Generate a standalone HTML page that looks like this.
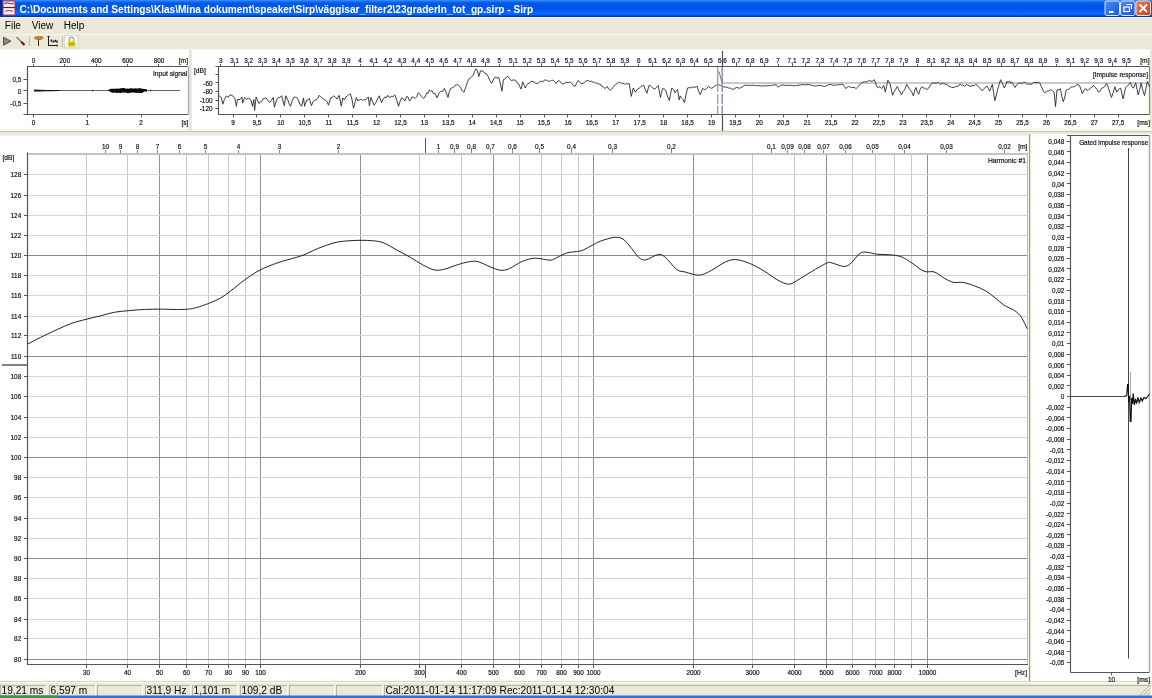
<!DOCTYPE html><html><head><meta charset="utf-8"><title>Sirp</title><style>html,body{margin:0;padding:0;background:#ECE9D8;overflow:hidden;width:1152px;height:698px;}svg{display:block;will-change:transform;}</style></head><body><svg width="1152" height="698" viewBox="0 0 1152 698"><rect x="0" y="0" width="1152" height="698" fill="#ECE9D8"/><defs><linearGradient id="tb" x1="0" y1="0" x2="0" y2="1"><stop offset="0" stop-color="#3A93FF"/><stop offset="0.1" stop-color="#1a6ef5"/><stop offset="0.2" stop-color="#0058E6"/><stop offset="0.55" stop-color="#0056E8"/><stop offset="0.8" stop-color="#0866FF"/><stop offset="1" stop-color="#0760F5"/></linearGradient><linearGradient id="cl" x1="0" y1="0" x2="1" y2="1"><stop offset="0" stop-color="#E8805A"/><stop offset="1" stop-color="#C8401A"/></linearGradient><linearGradient id="bb" x1="0" y1="0" x2="1" y2="1"><stop offset="0" stop-color="#4C8BF5"/><stop offset="1" stop-color="#1A55D8"/></linearGradient></defs><rect x="0" y="0" width="1152" height="16" fill="url(#tb)"/><rect x="0" y="15.5" width="1152" height="1.5" fill="#0038B0"/><rect x="0" y="17" width="1152" height="1" fill="#F4F6FF"/><rect x="0" y="0" width="2.5" height="17" fill="#0028A0"/><rect x="2.5" y="0.5" width="13" height="15" fill="#B03050"/><rect x="3.5" y="1.5" width="11" height="13" fill="#FBEFF3"/><line x1="3" y1="7.5" x2="15" y2="7.5" stroke="#8A1030" stroke-width="1.2"/><path d="M4,4 Q6,2.5 8,3 T12,4 L14,3" fill="none" stroke="#333" stroke-width="1"/><path d="M5,12 Q7,9.5 9,10.5 T13,11" fill="none" stroke="#444" stroke-width="0.9"/><text x="19.5" y="12.6" fill="#FFFFFF" font-family="Liberation Sans, sans-serif" font-weight="bold" font-size="10.08" id="title">C:\Documents and Settings\Klas\Mina dokument\speaker\Sirp\väggisar_filter2\23graderIn_tot_gp.sirp - Sirp</text><rect x="1105" y="1" width="14.5" height="14.5" rx="2" fill="url(#bb)" stroke="#D8E6FF" stroke-width="1"/><rect x="1120.5" y="1" width="14.5" height="14.5" rx="2" fill="url(#bb)" stroke="#D8E6FF" stroke-width="1"/><rect x="1136" y="1" width="14.5" height="14.5" rx="2" fill="url(#cl)" stroke="#F0E0E0" stroke-width="1"/><rect x="1109" y="11" width="4.5" height="2" fill="#FFFFFF"/><rect x="1124" y="7" width="5.5" height="4.5" fill="none" stroke="#fff" stroke-width="1.2"/><path d="M1126.5,4.5 h5 v4.5" fill="none" stroke="#fff" stroke-width="1.2"/><path d="M1139.5,4.5 L1147,12 M1147,4.5 L1139.5,12" stroke="#fff" stroke-width="1.8"/><g font-family="Liberation Sans, sans-serif" font-size="10" fill="#000"><text x="4.8" y="29">File</text><text x="31.8" y="29">View</text><text x="63.8" y="29">Help</text></g><rect x="0" y="34" width="1152" height="1" fill="#F7F6EF"/><path d="M3.5,37.2 L11,41.2 L3.5,45.2 Z" fill="#8A8A8A" stroke="#2a2a2a" stroke-width="0.7" stroke-linejoin="round"/><line x1="16.5" y1="37" x2="21.5" y2="42" stroke="#1a1a1a" stroke-width="1"/><line x1="21.2" y1="41.8" x2="24.5" y2="45" stroke="#7A1010" stroke-width="2.1"/><line x1="29.5" y1="36" x2="29.5" y2="46" stroke="#C4C0AE" stroke-width="1"/><ellipse cx="38.8" cy="37.9" rx="4.6" ry="1.7" fill="#D4963C" stroke="#9A6A20" stroke-width="0.5"/><rect x="36.3" y="37.4" width="1" height="1" fill="#5a3a10"/><rect x="38.3" y="37.4" width="1" height="1" fill="#5a3a10"/><rect x="40.3" y="37.4" width="1" height="1" fill="#5a3a10"/><line x1="38.5" y1="39.2" x2="38.5" y2="46" stroke="#2a2a2a" stroke-width="1"/><line x1="48.5" y1="36" x2="48.5" y2="46" stroke="#1a1a1a" stroke-width="1"/><line x1="48.5" y1="45.5" x2="57.5" y2="45.5" stroke="#1a1a1a" stroke-width="1"/><rect x="47.5" y="36" width="2" height="1" fill="#1a1a1a"/><rect x="56.5" y="44.5" width="1" height="2" fill="#1a1a1a"/><rect x="50.5" y="39.5" width="1.6" height="2.2" fill="#202060"/><rect x="52.5" y="40.5" width="1.6" height="2.2" fill="#202060"/><rect x="54.5" y="39.8" width="1.6" height="2.2" fill="#202060"/><rect x="56.2" y="40.5" width="1.6" height="2.2" fill="#202060"/><line x1="62.5" y1="36" x2="62.5" y2="47" stroke="#C4C0AE" stroke-width="1"/><rect x="64.5" y="35.2" width="13.5" height="12.6" fill="#F6F5EF" stroke="#D4D0C0" stroke-width="0.7"/><path d="M69.3,41.5 v-2.2 a2.2,2.2 0 0 1 4.4,0 v2.2" fill="none" stroke="#8a8a8a" stroke-width="1"/><rect x="67.8" y="41" width="7.6" height="6" rx="1.5" fill="#D8D820"/><rect x="68.8" y="43" width="5.6" height="2" fill="#B0B000"/><rect x="0" y="49" width="1152" height="1" fill="#F6F5EE"/><rect x="0" y="50" width="189" height="81" fill="#FFFFFF"/><rect x="191.5" y="50" width="958.5" height="81" fill="#FFFFFF"/><rect x="0" y="135.5" width="1028.5" height="545.3" fill="#FFFFFF"/><rect x="1031" y="134" width="121" height="549.5" fill="#FFFFFF"/><line x1="1029.5" y1="134" x2="1029.5" y2="683" stroke="#9A988C" stroke-width="1"/><rect x="0" y="128.5" width="1152" height="2.5" fill="#F8F7F2"/><rect x="0" y="131" width="1152" height="1" fill="#C8C6B8"/><rect x="189" y="50" width="2.5" height="81" fill="#E6E4D8"/><line x1="86.5" y1="154" x2="86.5" y2="664.5" stroke="#C8C8C8" stroke-width="1"/><line x1="86.5" y1="664.5" x2="86.5" y2="668" stroke="#555555" stroke-width="1"/><line x1="127.5" y1="154" x2="127.5" y2="664.5" stroke="#C8C8C8" stroke-width="1"/><line x1="127.5" y1="664.5" x2="127.5" y2="668" stroke="#555555" stroke-width="1"/><line x1="159.5" y1="154" x2="159.5" y2="664.5" stroke="#939393" stroke-width="1"/><line x1="159.5" y1="664.5" x2="159.5" y2="668" stroke="#555555" stroke-width="1"/><line x1="186.5" y1="154" x2="186.5" y2="664.5" stroke="#C8C8C8" stroke-width="1"/><line x1="186.5" y1="664.5" x2="186.5" y2="668" stroke="#555555" stroke-width="1"/><line x1="208.5" y1="154" x2="208.5" y2="664.5" stroke="#C8C8C8" stroke-width="1"/><line x1="208.5" y1="664.5" x2="208.5" y2="668" stroke="#555555" stroke-width="1"/><line x1="228.5" y1="154" x2="228.5" y2="664.5" stroke="#C8C8C8" stroke-width="1"/><line x1="228.5" y1="664.5" x2="228.5" y2="668" stroke="#555555" stroke-width="1"/><line x1="245.5" y1="154" x2="245.5" y2="664.5" stroke="#C8C8C8" stroke-width="1"/><line x1="245.5" y1="664.5" x2="245.5" y2="668" stroke="#555555" stroke-width="1"/><line x1="260.5" y1="154" x2="260.5" y2="664.5" stroke="#939393" stroke-width="1"/><line x1="260.5" y1="664.5" x2="260.5" y2="668" stroke="#555555" stroke-width="1"/><line x1="360.5" y1="154" x2="360.5" y2="664.5" stroke="#939393" stroke-width="1"/><line x1="360.5" y1="664.5" x2="360.5" y2="668" stroke="#555555" stroke-width="1"/><line x1="419.5" y1="154" x2="419.5" y2="664.5" stroke="#C8C8C8" stroke-width="1"/><line x1="419.5" y1="664.5" x2="419.5" y2="668" stroke="#555555" stroke-width="1"/><line x1="461.5" y1="154" x2="461.5" y2="664.5" stroke="#C8C8C8" stroke-width="1"/><line x1="461.5" y1="664.5" x2="461.5" y2="668" stroke="#555555" stroke-width="1"/><line x1="493.5" y1="154" x2="493.5" y2="664.5" stroke="#939393" stroke-width="1"/><line x1="493.5" y1="664.5" x2="493.5" y2="668" stroke="#555555" stroke-width="1"/><line x1="519.5" y1="154" x2="519.5" y2="664.5" stroke="#C8C8C8" stroke-width="1"/><line x1="519.5" y1="664.5" x2="519.5" y2="668" stroke="#555555" stroke-width="1"/><line x1="541.5" y1="154" x2="541.5" y2="664.5" stroke="#C8C8C8" stroke-width="1"/><line x1="541.5" y1="664.5" x2="541.5" y2="668" stroke="#555555" stroke-width="1"/><line x1="561.5" y1="154" x2="561.5" y2="664.5" stroke="#C8C8C8" stroke-width="1"/><line x1="561.5" y1="664.5" x2="561.5" y2="668" stroke="#555555" stroke-width="1"/><line x1="578.5" y1="154" x2="578.5" y2="664.5" stroke="#C8C8C8" stroke-width="1"/><line x1="578.5" y1="664.5" x2="578.5" y2="668" stroke="#555555" stroke-width="1"/><line x1="593.5" y1="154" x2="593.5" y2="664.5" stroke="#939393" stroke-width="1"/><line x1="593.5" y1="664.5" x2="593.5" y2="668" stroke="#555555" stroke-width="1"/><line x1="693.5" y1="154" x2="693.5" y2="664.5" stroke="#939393" stroke-width="1"/><line x1="693.5" y1="664.5" x2="693.5" y2="668" stroke="#555555" stroke-width="1"/><line x1="752.5" y1="154" x2="752.5" y2="664.5" stroke="#C8C8C8" stroke-width="1"/><line x1="752.5" y1="664.5" x2="752.5" y2="668" stroke="#555555" stroke-width="1"/><line x1="794.5" y1="154" x2="794.5" y2="664.5" stroke="#C8C8C8" stroke-width="1"/><line x1="794.5" y1="664.5" x2="794.5" y2="668" stroke="#555555" stroke-width="1"/><line x1="826.5" y1="154" x2="826.5" y2="664.5" stroke="#939393" stroke-width="1"/><line x1="826.5" y1="664.5" x2="826.5" y2="668" stroke="#555555" stroke-width="1"/><line x1="852.5" y1="154" x2="852.5" y2="664.5" stroke="#C8C8C8" stroke-width="1"/><line x1="852.5" y1="664.5" x2="852.5" y2="668" stroke="#555555" stroke-width="1"/><line x1="875.5" y1="154" x2="875.5" y2="664.5" stroke="#C8C8C8" stroke-width="1"/><line x1="875.5" y1="664.5" x2="875.5" y2="668" stroke="#555555" stroke-width="1"/><line x1="894.5" y1="154" x2="894.5" y2="664.5" stroke="#C8C8C8" stroke-width="1"/><line x1="894.5" y1="664.5" x2="894.5" y2="668" stroke="#555555" stroke-width="1"/><line x1="911.5" y1="154" x2="911.5" y2="664.5" stroke="#C8C8C8" stroke-width="1"/><line x1="911.5" y1="664.5" x2="911.5" y2="668" stroke="#555555" stroke-width="1"/><line x1="927.5" y1="154" x2="927.5" y2="664.5" stroke="#939393" stroke-width="1"/><line x1="927.5" y1="664.5" x2="927.5" y2="668" stroke="#555555" stroke-width="1"/><line x1="27.5" y1="659.5" x2="1027.5" y2="659.5" stroke="#888888" stroke-width="1"/><line x1="24" y1="659.5" x2="27.5" y2="659.5" stroke="#555555" stroke-width="1"/><line x1="27.5" y1="638.5" x2="1027.5" y2="638.5" stroke="#D4D4D4" stroke-width="1"/><line x1="24" y1="638.5" x2="27.5" y2="638.5" stroke="#555555" stroke-width="1"/><line x1="27.5" y1="619.5" x2="1027.5" y2="619.5" stroke="#D4D4D4" stroke-width="1"/><line x1="24" y1="619.5" x2="27.5" y2="619.5" stroke="#555555" stroke-width="1"/><line x1="27.5" y1="598.5" x2="1027.5" y2="598.5" stroke="#D4D4D4" stroke-width="1"/><line x1="24" y1="598.5" x2="27.5" y2="598.5" stroke="#555555" stroke-width="1"/><line x1="27.5" y1="578.5" x2="1027.5" y2="578.5" stroke="#D4D4D4" stroke-width="1"/><line x1="24" y1="578.5" x2="27.5" y2="578.5" stroke="#555555" stroke-width="1"/><line x1="27.5" y1="558.5" x2="1027.5" y2="558.5" stroke="#888888" stroke-width="1"/><line x1="24" y1="558.5" x2="27.5" y2="558.5" stroke="#555555" stroke-width="1"/><line x1="27.5" y1="538.5" x2="1027.5" y2="538.5" stroke="#D4D4D4" stroke-width="1"/><line x1="24" y1="538.5" x2="27.5" y2="538.5" stroke="#555555" stroke-width="1"/><line x1="27.5" y1="518.5" x2="1027.5" y2="518.5" stroke="#D4D4D4" stroke-width="1"/><line x1="24" y1="518.5" x2="27.5" y2="518.5" stroke="#555555" stroke-width="1"/><line x1="27.5" y1="497.5" x2="1027.5" y2="497.5" stroke="#D4D4D4" stroke-width="1"/><line x1="24" y1="497.5" x2="27.5" y2="497.5" stroke="#555555" stroke-width="1"/><line x1="27.5" y1="477.5" x2="1027.5" y2="477.5" stroke="#D4D4D4" stroke-width="1"/><line x1="24" y1="477.5" x2="27.5" y2="477.5" stroke="#555555" stroke-width="1"/><line x1="27.5" y1="457.5" x2="1027.5" y2="457.5" stroke="#888888" stroke-width="1"/><line x1="24" y1="457.5" x2="27.5" y2="457.5" stroke="#555555" stroke-width="1"/><line x1="27.5" y1="437.5" x2="1027.5" y2="437.5" stroke="#D4D4D4" stroke-width="1"/><line x1="24" y1="437.5" x2="27.5" y2="437.5" stroke="#555555" stroke-width="1"/><line x1="27.5" y1="417.5" x2="1027.5" y2="417.5" stroke="#D4D4D4" stroke-width="1"/><line x1="24" y1="417.5" x2="27.5" y2="417.5" stroke="#555555" stroke-width="1"/><line x1="27.5" y1="396.5" x2="1027.5" y2="396.5" stroke="#D4D4D4" stroke-width="1"/><line x1="24" y1="396.5" x2="27.5" y2="396.5" stroke="#555555" stroke-width="1"/><line x1="27.5" y1="376.5" x2="1027.5" y2="376.5" stroke="#D4D4D4" stroke-width="1"/><line x1="24" y1="376.5" x2="27.5" y2="376.5" stroke="#555555" stroke-width="1"/><line x1="27.5" y1="356.5" x2="1027.5" y2="356.5" stroke="#888888" stroke-width="1"/><line x1="24" y1="356.5" x2="27.5" y2="356.5" stroke="#555555" stroke-width="1"/><line x1="27.5" y1="335.5" x2="1027.5" y2="335.5" stroke="#D4D4D4" stroke-width="1"/><line x1="24" y1="335.5" x2="27.5" y2="335.5" stroke="#555555" stroke-width="1"/><line x1="27.5" y1="316.5" x2="1027.5" y2="316.5" stroke="#D4D4D4" stroke-width="1"/><line x1="24" y1="316.5" x2="27.5" y2="316.5" stroke="#555555" stroke-width="1"/><line x1="27.5" y1="295.5" x2="1027.5" y2="295.5" stroke="#D4D4D4" stroke-width="1"/><line x1="24" y1="295.5" x2="27.5" y2="295.5" stroke="#555555" stroke-width="1"/><line x1="27.5" y1="275.5" x2="1027.5" y2="275.5" stroke="#D4D4D4" stroke-width="1"/><line x1="24" y1="275.5" x2="27.5" y2="275.5" stroke="#555555" stroke-width="1"/><line x1="27.5" y1="255.5" x2="1027.5" y2="255.5" stroke="#888888" stroke-width="1"/><line x1="24" y1="255.5" x2="27.5" y2="255.5" stroke="#555555" stroke-width="1"/><line x1="27.5" y1="235.5" x2="1027.5" y2="235.5" stroke="#D4D4D4" stroke-width="1"/><line x1="24" y1="235.5" x2="27.5" y2="235.5" stroke="#555555" stroke-width="1"/><line x1="27.5" y1="215.5" x2="1027.5" y2="215.5" stroke="#D4D4D4" stroke-width="1"/><line x1="24" y1="215.5" x2="27.5" y2="215.5" stroke="#555555" stroke-width="1"/><line x1="27.5" y1="195.5" x2="1027.5" y2="195.5" stroke="#D4D4D4" stroke-width="1"/><line x1="24" y1="195.5" x2="27.5" y2="195.5" stroke="#555555" stroke-width="1"/><line x1="27.5" y1="174.5" x2="1027.5" y2="174.5" stroke="#D4D4D4" stroke-width="1"/><line x1="24" y1="174.5" x2="27.5" y2="174.5" stroke="#555555" stroke-width="1"/><rect x="27.5" y="153" width="1000" height="2" fill="#C4C4C4"/><line x1="1027.5" y1="152.5" x2="1027.5" y2="664.5" stroke="#BBBBBB" stroke-width="1"/><line x1="27.5" y1="152.5" x2="27.5" y2="665" stroke="#555555" stroke-width="1.2"/><line x1="27" y1="664.5" x2="1028" y2="664.5" stroke="#555555" stroke-width="1.2"/><line x1="105.5" y1="150" x2="105.5" y2="153" stroke="#888888" stroke-width="1"/><line x1="120.5" y1="150" x2="120.5" y2="153" stroke="#888888" stroke-width="1"/><line x1="137.5" y1="150" x2="137.5" y2="153" stroke="#888888" stroke-width="1"/><line x1="157.5" y1="150" x2="157.5" y2="153" stroke="#888888" stroke-width="1"/><line x1="179.5" y1="150" x2="179.5" y2="153" stroke="#888888" stroke-width="1"/><line x1="205.5" y1="150" x2="205.5" y2="153" stroke="#888888" stroke-width="1"/><line x1="238.5" y1="150" x2="238.5" y2="153" stroke="#888888" stroke-width="1"/><line x1="279.5" y1="150" x2="279.5" y2="153" stroke="#888888" stroke-width="1"/><line x1="338.5" y1="150" x2="338.5" y2="153" stroke="#888888" stroke-width="1"/><line x1="438.5" y1="150" x2="438.5" y2="153" stroke="#888888" stroke-width="1"/><line x1="454.5" y1="150" x2="454.5" y2="153" stroke="#888888" stroke-width="1"/><line x1="471.5" y1="150" x2="471.5" y2="153" stroke="#888888" stroke-width="1"/><line x1="490.5" y1="150" x2="490.5" y2="153" stroke="#888888" stroke-width="1"/><line x1="512.5" y1="150" x2="512.5" y2="153" stroke="#888888" stroke-width="1"/><line x1="539.5" y1="150" x2="539.5" y2="153" stroke="#888888" stroke-width="1"/><line x1="571.5" y1="150" x2="571.5" y2="153" stroke="#888888" stroke-width="1"/><line x1="612.5" y1="150" x2="612.5" y2="153" stroke="#888888" stroke-width="1"/><line x1="671.5" y1="150" x2="671.5" y2="153" stroke="#888888" stroke-width="1"/><line x1="771.5" y1="150" x2="771.5" y2="153" stroke="#888888" stroke-width="1"/><line x1="787.5" y1="150" x2="787.5" y2="153" stroke="#888888" stroke-width="1"/><line x1="804.5" y1="150" x2="804.5" y2="153" stroke="#888888" stroke-width="1"/><line x1="823.5" y1="150" x2="823.5" y2="153" stroke="#888888" stroke-width="1"/><line x1="845.5" y1="150" x2="845.5" y2="153" stroke="#888888" stroke-width="1"/><line x1="872.5" y1="150" x2="872.5" y2="153" stroke="#888888" stroke-width="1"/><line x1="904.5" y1="150" x2="904.5" y2="153" stroke="#888888" stroke-width="1"/><line x1="946.5" y1="150" x2="946.5" y2="153" stroke="#888888" stroke-width="1"/><line x1="1004.5" y1="150" x2="1004.5" y2="153" stroke="#888888" stroke-width="1"/><line x1="425.5" y1="138" x2="425.5" y2="153" stroke="#555555" stroke-width="1"/><line x1="425.5" y1="664.5" x2="425.5" y2="678" stroke="#555555" stroke-width="1"/><line x1="2" y1="365" x2="27.5" y2="365" stroke="#606060" stroke-width="1.6"/><path d="M27.6,344 C30.68,342.45 39,338.05 46.1,334.7 C53.2,331.35 63.52,326.47 70.2,323.9 C76.88,321.33 81.2,320.63 86.2,319.3 C91.2,317.97 95.52,317.07 100.2,315.9 C104.88,314.73 109.62,313.17 114.3,312.3 C118.98,311.43 123.28,311.17 128.3,310.7 C133.32,310.23 139.05,309.77 144.4,309.5 C149.75,309.23 155.05,309.1 160.4,309.1 C165.75,309.1 171.82,309.5 176.5,309.5 C181.18,309.5 185.17,309.43 188.5,309.1 C191.83,308.77 193.15,308.43 196.5,307.5 C199.85,306.57 204.62,305.07 208.6,303.5 C212.58,301.93 216.7,300.22 220.4,298.1 C224.1,295.98 226.75,293.83 230.8,290.8 C234.85,287.77 240.35,283.08 244.7,279.9 C249.05,276.72 252.85,274.02 256.9,271.7 C260.95,269.38 264.67,267.77 269,266 C273.33,264.23 277.4,262.83 282.9,261.1 C288.4,259.37 296.22,257.68 302,255.6 C307.78,253.52 312.1,250.77 317.6,248.6 C323.1,246.43 329.78,243.9 335,242.6 C340.22,241.3 344.57,241.18 348.9,240.8 C353.23,240.42 356.95,240.3 361,240.3 C365.05,240.3 369.43,240.37 373.2,240.8 C376.97,241.23 379.55,241.3 383.6,242.9 C387.65,244.5 393.03,248 397.5,250.4 C401.97,252.8 406.22,254.9 410.4,257.3 C414.58,259.7 418.55,262.68 422.6,264.8 C426.65,266.92 430.95,269.3 434.7,270 C438.45,270.7 441.33,269.87 445.1,269 C448.87,268.13 453.25,266.02 457.3,264.8 C461.35,263.58 465.93,262.22 469.4,261.7 C472.87,261.18 474.62,260.83 478.1,261.7 C481.58,262.57 486.53,265.47 490.3,266.9 C494.07,268.33 497.52,270.02 500.7,270.3 C503.88,270.58 505.93,270.03 509.4,268.6 C512.87,267.17 517.75,263.38 521.5,261.7 C525.25,260.02 529,259.03 531.9,258.5 C534.8,257.97 536.28,258.27 538.9,258.5 C541.52,258.73 545.28,259.72 547.6,259.9 C549.92,260.08 549.62,260.75 552.8,259.6 C555.98,258.45 562.07,254.45 566.7,253 C571.33,251.55 576.55,252.07 580.6,250.9 C584.65,249.73 587.7,247.62 591,246 C594.3,244.38 596.52,242.63 600.4,241.2 C604.28,239.77 610.53,237.75 614.3,237.4 C618.07,237.05 620.1,237.23 623,239.1 C625.9,240.97 629.1,245.57 631.7,248.6 C634.3,251.63 636.28,255.42 638.6,257.3 C640.92,259.18 642.42,260.33 645.6,259.9 C648.78,259.47 654.52,255.22 657.7,254.7 C660.88,254.18 661.52,254.33 664.7,256.8 C667.88,259.27 673.33,266.95 676.8,269.5 C680.27,272.05 681.73,271.15 685.5,272.1 C689.27,273.05 695.07,275.5 699.4,275.2 C703.73,274.9 707.17,272.5 711.5,270.3 C715.83,268.1 721.35,263.78 725.4,262 C729.45,260.22 731.75,259.37 735.8,259.6 C739.85,259.83 745.07,261.55 749.7,263.4 C754.33,265.25 758.97,267.95 763.6,270.7 C768.23,273.45 773.32,277.65 777.5,279.9 C781.68,282.15 785.38,284.13 788.7,284.2 C792.02,284.27 793.63,282.38 797.4,280.3 C801.17,278.22 806.38,274.58 811.3,271.7 C816.22,268.82 823.43,264.45 826.9,263 C830.37,261.55 829.22,262.42 832.1,263 C834.98,263.58 841.02,266.5 844.2,266.5 C847.38,266.5 848.58,265.18 851.2,263 C853.82,260.82 857.3,255.2 859.9,253.4 C862.5,251.6 863.92,252.05 866.8,252.2 C869.68,252.35 873.43,253.88 877.2,254.3 C880.97,254.72 885.35,254.27 889.4,254.7 C893.45,255.13 897.75,255.52 901.5,256.9 C905.25,258.28 908.13,260.6 911.9,263 C915.67,265.4 920.33,269.8 924.1,271.3 C927.87,272.8 931.03,270.78 934.5,272 C937.97,273.22 941.68,276.87 944.9,278.6 C948.12,280.33 950.8,281.77 953.8,282.4 C956.8,283.03 959.47,281.83 962.9,282.4 C966.33,282.97 970.57,284.37 974.4,285.8 C978.23,287.23 982.47,289 985.9,291 C989.33,293 991.95,295.42 995,297.8 C998.05,300.18 1000.95,303.18 1004.2,305.3 C1007.45,307.42 1011.63,308.5 1014.5,310.5 C1017.37,312.5 1019.28,314.25 1021.4,317.3 C1023.52,320.35 1026.23,326.88 1027.2,328.8" fill="none" stroke="#222" stroke-width="1"/><rect x="1070.5" y="135.6" width="0" height="0" fill="#000"/><line x1="1067" y1="662.5" x2="1070.5" y2="662.5" stroke="#555555" stroke-width="1"/><line x1="1067" y1="651.5" x2="1070.5" y2="651.5" stroke="#555555" stroke-width="1"/><line x1="1067" y1="641.5" x2="1070.5" y2="641.5" stroke="#555555" stroke-width="1"/><line x1="1067" y1="630.5" x2="1070.5" y2="630.5" stroke="#555555" stroke-width="1"/><line x1="1067" y1="620.5" x2="1070.5" y2="620.5" stroke="#555555" stroke-width="1"/><line x1="1067" y1="609.5" x2="1070.5" y2="609.5" stroke="#555555" stroke-width="1"/><line x1="1067" y1="598.5" x2="1070.5" y2="598.5" stroke="#555555" stroke-width="1"/><line x1="1067" y1="588.5" x2="1070.5" y2="588.5" stroke="#555555" stroke-width="1"/><line x1="1067" y1="577.5" x2="1070.5" y2="577.5" stroke="#555555" stroke-width="1"/><line x1="1067" y1="566.5" x2="1070.5" y2="566.5" stroke="#555555" stroke-width="1"/><line x1="1067" y1="556.5" x2="1070.5" y2="556.5" stroke="#555555" stroke-width="1"/><line x1="1067" y1="545.5" x2="1070.5" y2="545.5" stroke="#555555" stroke-width="1"/><line x1="1067" y1="534.5" x2="1070.5" y2="534.5" stroke="#555555" stroke-width="1"/><line x1="1067" y1="524.5" x2="1070.5" y2="524.5" stroke="#555555" stroke-width="1"/><line x1="1067" y1="513.5" x2="1070.5" y2="513.5" stroke="#555555" stroke-width="1"/><line x1="1067" y1="503.5" x2="1070.5" y2="503.5" stroke="#555555" stroke-width="1"/><line x1="1067" y1="492.5" x2="1070.5" y2="492.5" stroke="#555555" stroke-width="1"/><line x1="1067" y1="481.5" x2="1070.5" y2="481.5" stroke="#555555" stroke-width="1"/><line x1="1067" y1="471.5" x2="1070.5" y2="471.5" stroke="#555555" stroke-width="1"/><line x1="1067" y1="460.5" x2="1070.5" y2="460.5" stroke="#555555" stroke-width="1"/><line x1="1067" y1="449.5" x2="1070.5" y2="449.5" stroke="#555555" stroke-width="1"/><line x1="1067" y1="439.5" x2="1070.5" y2="439.5" stroke="#555555" stroke-width="1"/><line x1="1067" y1="428.5" x2="1070.5" y2="428.5" stroke="#555555" stroke-width="1"/><line x1="1067" y1="417.5" x2="1070.5" y2="417.5" stroke="#555555" stroke-width="1"/><line x1="1067" y1="407.5" x2="1070.5" y2="407.5" stroke="#555555" stroke-width="1"/><line x1="1067" y1="396.5" x2="1070.5" y2="396.5" stroke="#555555" stroke-width="1"/><line x1="1067" y1="385.5" x2="1070.5" y2="385.5" stroke="#555555" stroke-width="1"/><line x1="1067" y1="375.5" x2="1070.5" y2="375.5" stroke="#555555" stroke-width="1"/><line x1="1067" y1="364.5" x2="1070.5" y2="364.5" stroke="#555555" stroke-width="1"/><line x1="1067" y1="354.5" x2="1070.5" y2="354.5" stroke="#555555" stroke-width="1"/><line x1="1067" y1="343.5" x2="1070.5" y2="343.5" stroke="#555555" stroke-width="1"/><line x1="1067" y1="332.5" x2="1070.5" y2="332.5" stroke="#555555" stroke-width="1"/><line x1="1067" y1="322.5" x2="1070.5" y2="322.5" stroke="#555555" stroke-width="1"/><line x1="1067" y1="311.5" x2="1070.5" y2="311.5" stroke="#555555" stroke-width="1"/><line x1="1067" y1="300.5" x2="1070.5" y2="300.5" stroke="#555555" stroke-width="1"/><line x1="1067" y1="290.5" x2="1070.5" y2="290.5" stroke="#555555" stroke-width="1"/><line x1="1067" y1="279.5" x2="1070.5" y2="279.5" stroke="#555555" stroke-width="1"/><line x1="1067" y1="268.5" x2="1070.5" y2="268.5" stroke="#555555" stroke-width="1"/><line x1="1067" y1="258.5" x2="1070.5" y2="258.5" stroke="#555555" stroke-width="1"/><line x1="1067" y1="247.5" x2="1070.5" y2="247.5" stroke="#555555" stroke-width="1"/><line x1="1067" y1="237.5" x2="1070.5" y2="237.5" stroke="#555555" stroke-width="1"/><line x1="1067" y1="226.5" x2="1070.5" y2="226.5" stroke="#555555" stroke-width="1"/><line x1="1067" y1="215.5" x2="1070.5" y2="215.5" stroke="#555555" stroke-width="1"/><line x1="1067" y1="205.5" x2="1070.5" y2="205.5" stroke="#555555" stroke-width="1"/><line x1="1067" y1="194.5" x2="1070.5" y2="194.5" stroke="#555555" stroke-width="1"/><line x1="1067" y1="183.5" x2="1070.5" y2="183.5" stroke="#555555" stroke-width="1"/><line x1="1067" y1="173.5" x2="1070.5" y2="173.5" stroke="#555555" stroke-width="1"/><line x1="1067" y1="162.5" x2="1070.5" y2="162.5" stroke="#555555" stroke-width="1"/><line x1="1067" y1="151.5" x2="1070.5" y2="151.5" stroke="#555555" stroke-width="1"/><line x1="1067" y1="141.5" x2="1070.5" y2="141.5" stroke="#555555" stroke-width="1"/><line x1="1070.5" y1="135.6" x2="1070.5" y2="672.2" stroke="#555555" stroke-width="1.2"/><line x1="1067" y1="135.5" x2="1149.5" y2="135.5" stroke="#555555" stroke-width="1.2"/><line x1="1149.5" y1="135.6" x2="1149.5" y2="672.2" stroke="#A8A8A8" stroke-width="1.5"/><line x1="1070.5" y1="672.5" x2="1149.5" y2="672.5" stroke="#555555" stroke-width="1.2"/><line x1="1111.5" y1="672.2" x2="1111.5" y2="675.2" stroke="#555555" stroke-width="1"/><line x1="1128.5" y1="148" x2="1128.5" y2="658.5" stroke="#444" stroke-width="1"/><line x1="1130.5" y1="372" x2="1130.5" y2="400" stroke="#AAA" stroke-width="1"/><line x1="1070.5" y1="396.5" x2="1124.5" y2="396.5" stroke="#4a4a4a" stroke-width="1"/><path d="M1124,396.5 L1126.8,395.5 L1127.6,384.5 L1128.2,384.5 L1128.8,402.5 L1129.6,396 L1130.3,421.5 L1131,421.5 L1131.6,398 L1132.4,404 L1133.2,393.5 L1134.2,405 L1135.5,399 L1136.5,403.5 L1138,397.5 L1139.2,402.5 L1141,398 L1142.2,401 L1144,397.5 L1146,398.5 L1149.5,394" fill="none" stroke="#111" stroke-width="1.2"/><line x1="27" y1="66.5" x2="188" y2="66.5" stroke="#555555" stroke-width="1.2"/><line x1="27.5" y1="66.6" x2="27.5" y2="114.5" stroke="#555555" stroke-width="1.2"/><line x1="23.5" y1="114.5" x2="188" y2="114.5" stroke="#555555" stroke-width="1.2"/><line x1="188.5" y1="66.6" x2="188.5" y2="114.5" stroke="#A8A8A8" stroke-width="1.2"/><line x1="23.5" y1="79.5" x2="27" y2="79.5" stroke="#555555" stroke-width="1"/><line x1="23.5" y1="90.5" x2="27" y2="90.5" stroke="#555555" stroke-width="1"/><line x1="23.5" y1="103.5" x2="27" y2="103.5" stroke="#555555" stroke-width="1"/><line x1="33.5" y1="64" x2="33.5" y2="66.6" stroke="#555555" stroke-width="1"/><line x1="64.5" y1="64" x2="64.5" y2="66.6" stroke="#555555" stroke-width="1"/><line x1="96.5" y1="64" x2="96.5" y2="66.6" stroke="#555555" stroke-width="1"/><line x1="127.5" y1="64" x2="127.5" y2="66.6" stroke="#555555" stroke-width="1"/><line x1="158.5" y1="64" x2="158.5" y2="66.6" stroke="#555555" stroke-width="1"/><line x1="33.5" y1="114.5" x2="33.5" y2="117.5" stroke="#555555" stroke-width="1"/><line x1="87.5" y1="114.5" x2="87.5" y2="117.5" stroke="#555555" stroke-width="1"/><line x1="141.5" y1="114.5" x2="141.5" y2="117.5" stroke="#555555" stroke-width="1"/><line x1="34" y1="90.5" x2="180" y2="90.5" stroke="#666" stroke-width="1"/><path d="M34,89.6 L40,89.8 L46,90 L52,90 L60,90.2 L60,90.9 L52,91.2 L46,91.2 L40,91.4 L34,91.5 Z" fill="#111"/><path d="M108,90.31 L109.5,89.34 L111,88.77 L112.5,88.75 L114,88.77 L115.5,88.74 L117,88.42 L118.5,88.69 L120,88.24 L121.5,88.28 L123,87.92 L124.5,88.03 L126,88.67 L127.5,88.52 L129,88.64 L130.5,88.22 L132,88.31 L133.5,88.75 L135,88.19 L136.5,88.52 L138,88.39 L139.5,88.09 L141,88.58 L142.5,88.78 L144,89.04 L145.5,89.12 L147,89.62 L147,91.88 L145.5,91.31 L144,91.76 L142.5,92.74 L141,92.92 L139.5,93.03 L138,92.67 L136.5,92.93 L135,92.78 L133.5,92.59 L132,92.46 L130.5,92.74 L129,92.92 L127.5,93.13 L126,92.51 L124.5,92.66 L123,92.44 L121.5,92.76 L120,93.25 L118.5,92.6 L117,93.14 L115.5,92.48 L114,92.79 L112.5,92.86 L111,92.28 L109.5,91.34 L108,90.74 Z" fill="#0a0a0a"/><rect x="92" y="89.8" width="1.2" height="1.6" fill="#333"/><rect x="150" y="89.8" width="1.2" height="1.6" fill="#333"/><line x1="215.5" y1="66.5" x2="1149.7" y2="66.5" stroke="#555555" stroke-width="1.2"/><line x1="218.5" y1="66.6" x2="218.5" y2="114.5" stroke="#555555" stroke-width="1.2"/><line x1="218.5" y1="114.5" x2="1149.7" y2="114.5" stroke="#555555" stroke-width="1.2"/><line x1="1149.5" y1="66.6" x2="1149.5" y2="114.5" stroke="#888888" stroke-width="1.2"/><line x1="215.5" y1="74.5" x2="218.5" y2="74.5" stroke="#555555" stroke-width="1"/><line x1="215.5" y1="82.5" x2="218.5" y2="82.5" stroke="#555555" stroke-width="1"/><line x1="215.5" y1="91.5" x2="218.5" y2="91.5" stroke="#555555" stroke-width="1"/><line x1="215.5" y1="100.5" x2="218.5" y2="100.5" stroke="#555555" stroke-width="1"/><line x1="215.5" y1="108.5" x2="218.5" y2="108.5" stroke="#555555" stroke-width="1"/><line x1="220.5" y1="64" x2="220.5" y2="66.6" stroke="#555555" stroke-width="1"/><line x1="234.5" y1="64" x2="234.5" y2="66.6" stroke="#555555" stroke-width="1"/><line x1="248.5" y1="64" x2="248.5" y2="66.6" stroke="#555555" stroke-width="1"/><line x1="262.5" y1="64" x2="262.5" y2="66.6" stroke="#555555" stroke-width="1"/><line x1="276.5" y1="64" x2="276.5" y2="66.6" stroke="#555555" stroke-width="1"/><line x1="290.5" y1="64" x2="290.5" y2="66.6" stroke="#555555" stroke-width="1"/><line x1="304.5" y1="64" x2="304.5" y2="66.6" stroke="#555555" stroke-width="1"/><line x1="318.5" y1="64" x2="318.5" y2="66.6" stroke="#555555" stroke-width="1"/><line x1="332.5" y1="64" x2="332.5" y2="66.6" stroke="#555555" stroke-width="1"/><line x1="346.5" y1="64" x2="346.5" y2="66.6" stroke="#555555" stroke-width="1"/><line x1="360.5" y1="64" x2="360.5" y2="66.6" stroke="#555555" stroke-width="1"/><line x1="373.5" y1="64" x2="373.5" y2="66.6" stroke="#555555" stroke-width="1"/><line x1="387.5" y1="64" x2="387.5" y2="66.6" stroke="#555555" stroke-width="1"/><line x1="401.5" y1="64" x2="401.5" y2="66.6" stroke="#555555" stroke-width="1"/><line x1="415.5" y1="64" x2="415.5" y2="66.6" stroke="#555555" stroke-width="1"/><line x1="429.5" y1="64" x2="429.5" y2="66.6" stroke="#555555" stroke-width="1"/><line x1="443.5" y1="64" x2="443.5" y2="66.6" stroke="#555555" stroke-width="1"/><line x1="457.5" y1="64" x2="457.5" y2="66.6" stroke="#555555" stroke-width="1"/><line x1="471.5" y1="64" x2="471.5" y2="66.6" stroke="#555555" stroke-width="1"/><line x1="485.5" y1="64" x2="485.5" y2="66.6" stroke="#555555" stroke-width="1"/><line x1="499.5" y1="64" x2="499.5" y2="66.6" stroke="#555555" stroke-width="1"/><line x1="513.5" y1="64" x2="513.5" y2="66.6" stroke="#555555" stroke-width="1"/><line x1="527.5" y1="64" x2="527.5" y2="66.6" stroke="#555555" stroke-width="1"/><line x1="541.5" y1="64" x2="541.5" y2="66.6" stroke="#555555" stroke-width="1"/><line x1="555.5" y1="64" x2="555.5" y2="66.6" stroke="#555555" stroke-width="1"/><line x1="569.5" y1="64" x2="569.5" y2="66.6" stroke="#555555" stroke-width="1"/><line x1="583.5" y1="64" x2="583.5" y2="66.6" stroke="#555555" stroke-width="1"/><line x1="596.5" y1="64" x2="596.5" y2="66.6" stroke="#555555" stroke-width="1"/><line x1="610.5" y1="64" x2="610.5" y2="66.6" stroke="#555555" stroke-width="1"/><line x1="624.5" y1="64" x2="624.5" y2="66.6" stroke="#555555" stroke-width="1"/><line x1="638.5" y1="64" x2="638.5" y2="66.6" stroke="#555555" stroke-width="1"/><line x1="652.5" y1="64" x2="652.5" y2="66.6" stroke="#555555" stroke-width="1"/><line x1="666.5" y1="64" x2="666.5" y2="66.6" stroke="#555555" stroke-width="1"/><line x1="680.5" y1="64" x2="680.5" y2="66.6" stroke="#555555" stroke-width="1"/><line x1="694.5" y1="64" x2="694.5" y2="66.6" stroke="#555555" stroke-width="1"/><line x1="708.5" y1="64" x2="708.5" y2="66.6" stroke="#555555" stroke-width="1"/><line x1="722.5" y1="64" x2="722.5" y2="66.6" stroke="#555555" stroke-width="1"/><line x1="736.5" y1="64" x2="736.5" y2="66.6" stroke="#555555" stroke-width="1"/><line x1="750.5" y1="64" x2="750.5" y2="66.6" stroke="#555555" stroke-width="1"/><line x1="764.5" y1="64" x2="764.5" y2="66.6" stroke="#555555" stroke-width="1"/><line x1="778.5" y1="64" x2="778.5" y2="66.6" stroke="#555555" stroke-width="1"/><line x1="792.5" y1="64" x2="792.5" y2="66.6" stroke="#555555" stroke-width="1"/><line x1="805.5" y1="64" x2="805.5" y2="66.6" stroke="#555555" stroke-width="1"/><line x1="819.5" y1="64" x2="819.5" y2="66.6" stroke="#555555" stroke-width="1"/><line x1="833.5" y1="64" x2="833.5" y2="66.6" stroke="#555555" stroke-width="1"/><line x1="847.5" y1="64" x2="847.5" y2="66.6" stroke="#555555" stroke-width="1"/><line x1="861.5" y1="64" x2="861.5" y2="66.6" stroke="#555555" stroke-width="1"/><line x1="875.5" y1="64" x2="875.5" y2="66.6" stroke="#555555" stroke-width="1"/><line x1="889.5" y1="64" x2="889.5" y2="66.6" stroke="#555555" stroke-width="1"/><line x1="903.5" y1="64" x2="903.5" y2="66.6" stroke="#555555" stroke-width="1"/><line x1="917.5" y1="64" x2="917.5" y2="66.6" stroke="#555555" stroke-width="1"/><line x1="931.5" y1="64" x2="931.5" y2="66.6" stroke="#555555" stroke-width="1"/><line x1="945.5" y1="64" x2="945.5" y2="66.6" stroke="#555555" stroke-width="1"/><line x1="959.5" y1="64" x2="959.5" y2="66.6" stroke="#555555" stroke-width="1"/><line x1="973.5" y1="64" x2="973.5" y2="66.6" stroke="#555555" stroke-width="1"/><line x1="987.5" y1="64" x2="987.5" y2="66.6" stroke="#555555" stroke-width="1"/><line x1="1001.5" y1="64" x2="1001.5" y2="66.6" stroke="#555555" stroke-width="1"/><line x1="1014.5" y1="64" x2="1014.5" y2="66.6" stroke="#555555" stroke-width="1"/><line x1="1028.5" y1="64" x2="1028.5" y2="66.6" stroke="#555555" stroke-width="1"/><line x1="1042.5" y1="64" x2="1042.5" y2="66.6" stroke="#555555" stroke-width="1"/><line x1="1056.5" y1="64" x2="1056.5" y2="66.6" stroke="#555555" stroke-width="1"/><line x1="1070.5" y1="64" x2="1070.5" y2="66.6" stroke="#555555" stroke-width="1"/><line x1="1084.5" y1="64" x2="1084.5" y2="66.6" stroke="#555555" stroke-width="1"/><line x1="1098.5" y1="64" x2="1098.5" y2="66.6" stroke="#555555" stroke-width="1"/><line x1="1112.5" y1="64" x2="1112.5" y2="66.6" stroke="#555555" stroke-width="1"/><line x1="1126.5" y1="64" x2="1126.5" y2="66.6" stroke="#555555" stroke-width="1"/><line x1="233.5" y1="114.5" x2="233.5" y2="117.5" stroke="#555555" stroke-width="1"/><line x1="256.5" y1="114.5" x2="256.5" y2="117.5" stroke="#555555" stroke-width="1"/><line x1="280.5" y1="114.5" x2="280.5" y2="117.5" stroke="#555555" stroke-width="1"/><line x1="304.5" y1="114.5" x2="304.5" y2="117.5" stroke="#555555" stroke-width="1"/><line x1="328.5" y1="114.5" x2="328.5" y2="117.5" stroke="#555555" stroke-width="1"/><line x1="352.5" y1="114.5" x2="352.5" y2="117.5" stroke="#555555" stroke-width="1"/><line x1="376.5" y1="114.5" x2="376.5" y2="117.5" stroke="#555555" stroke-width="1"/><line x1="400.5" y1="114.5" x2="400.5" y2="117.5" stroke="#555555" stroke-width="1"/><line x1="424.5" y1="114.5" x2="424.5" y2="117.5" stroke="#555555" stroke-width="1"/><line x1="448.5" y1="114.5" x2="448.5" y2="117.5" stroke="#555555" stroke-width="1"/><line x1="472.5" y1="114.5" x2="472.5" y2="117.5" stroke="#555555" stroke-width="1"/><line x1="496.5" y1="114.5" x2="496.5" y2="117.5" stroke="#555555" stroke-width="1"/><line x1="520.5" y1="114.5" x2="520.5" y2="117.5" stroke="#555555" stroke-width="1"/><line x1="544.5" y1="114.5" x2="544.5" y2="117.5" stroke="#555555" stroke-width="1"/><line x1="567.5" y1="114.5" x2="567.5" y2="117.5" stroke="#555555" stroke-width="1"/><line x1="591.5" y1="114.5" x2="591.5" y2="117.5" stroke="#555555" stroke-width="1"/><line x1="615.5" y1="114.5" x2="615.5" y2="117.5" stroke="#555555" stroke-width="1"/><line x1="639.5" y1="114.5" x2="639.5" y2="117.5" stroke="#555555" stroke-width="1"/><line x1="663.5" y1="114.5" x2="663.5" y2="117.5" stroke="#555555" stroke-width="1"/><line x1="687.5" y1="114.5" x2="687.5" y2="117.5" stroke="#555555" stroke-width="1"/><line x1="711.5" y1="114.5" x2="711.5" y2="117.5" stroke="#555555" stroke-width="1"/><line x1="735.5" y1="114.5" x2="735.5" y2="117.5" stroke="#555555" stroke-width="1"/><line x1="759.5" y1="114.5" x2="759.5" y2="117.5" stroke="#555555" stroke-width="1"/><line x1="783.5" y1="114.5" x2="783.5" y2="117.5" stroke="#555555" stroke-width="1"/><line x1="807.5" y1="114.5" x2="807.5" y2="117.5" stroke="#555555" stroke-width="1"/><line x1="831.5" y1="114.5" x2="831.5" y2="117.5" stroke="#555555" stroke-width="1"/><line x1="855.5" y1="114.5" x2="855.5" y2="117.5" stroke="#555555" stroke-width="1"/><line x1="878.5" y1="114.5" x2="878.5" y2="117.5" stroke="#555555" stroke-width="1"/><line x1="902.5" y1="114.5" x2="902.5" y2="117.5" stroke="#555555" stroke-width="1"/><line x1="926.5" y1="114.5" x2="926.5" y2="117.5" stroke="#555555" stroke-width="1"/><line x1="950.5" y1="114.5" x2="950.5" y2="117.5" stroke="#555555" stroke-width="1"/><line x1="974.5" y1="114.5" x2="974.5" y2="117.5" stroke="#555555" stroke-width="1"/><line x1="998.5" y1="114.5" x2="998.5" y2="117.5" stroke="#555555" stroke-width="1"/><line x1="1022.5" y1="114.5" x2="1022.5" y2="117.5" stroke="#555555" stroke-width="1"/><line x1="1046.5" y1="114.5" x2="1046.5" y2="117.5" stroke="#555555" stroke-width="1"/><line x1="1070.5" y1="114.5" x2="1070.5" y2="117.5" stroke="#555555" stroke-width="1"/><line x1="1094.5" y1="114.5" x2="1094.5" y2="117.5" stroke="#555555" stroke-width="1"/><line x1="1118.5" y1="114.5" x2="1118.5" y2="117.5" stroke="#555555" stroke-width="1"/><rect x="722.5" y="82" width="427.2" height="2" fill="#CACACA"/><path d="M219.2,95.8 L221.3,97.4 L222.8,104.2 L224.4,99.5 L226.5,95.8 L228,97.4 L230.1,94.8 L232.7,95.8 L234.8,98.4 L236.4,106.3 L237.4,99.5 L240,99.5 L241.9,96.9 L242.6,103.1 L244.7,97.4 L246.8,99.5 L248.3,97.9 L250.9,100 L252.5,106.3 L253.8,99.5 L254.6,110.4 L256.1,96.9 L257.45,100.1 L258.8,103.6 L260.17,102.26 L261.53,101.89 L262.9,99 L264.45,98.34 L266,97.9 L267.85,100.28 L269.7,102.6 L271.5,100.28 L273.3,97.4 L274.4,107.3 L276.5,100 L278.23,97.59 L279.97,97.24 L281.7,95.8 L283,101.17 L284.3,105.7 L285.8,95.8 L287.9,100 L289.2,104.09 L290.5,106.3 L292.35,100.3 L294.2,96.9 L295.57,97.3 L296.93,97.66 L298.3,100 L299.9,104.14 L301.5,106.3 L303.5,97.9 L304.6,106.3 L306.7,100 L308,99.82 L309.3,98.4 L311.4,105.7 L313.2,101.38 L315,100 L316.4,99.98 L317.8,98.35 L319.2,95.3 L320.93,97.19 L322.67,98.47 L324.4,99.5 L325.77,100.3 L327.13,101.75 L328.5,105.2 L330.6,97.9 L332.07,97.66 L333.53,95.82 L335,96.9 L337.1,99 L339.2,95.3 L341.3,106.3 L342.8,97.9 L344.4,100 L345.95,96.91 L347.5,95.8 L349.05,94.22 L350.6,94.3 L352.05,99.8 L353.5,108.3 L354.95,102.73 L356.4,97.4 L357.9,101 L359.45,99.81 L361,99 L362.4,100.43 L363.8,99.73 L365.2,100 L366.75,98.9 L368.3,96.9 L369.4,105.7 L370.9,97.4 L372.5,101.3 L374.1,105.2 L375.83,102.59 L377.57,98.8 L379.3,95.8 L381.4,102.6 L383.2,99.04 L385,96.9 L386.3,97.69 L387.6,95.3 L389,97.25 L390.4,97.12 L391.8,96.4 L393.35,96.26 L394.9,94.8 L396.7,99.96 L398.5,106.3 L400.1,101.23 L401.7,97.9 L403.25,98.77 L404.8,101 L406.9,96.4 L408.2,97.32 L409.5,101 L410.8,99.8 L412.1,96.9 L413.65,97.33 L415.2,98.4 L416.75,96.66 L418.3,92.7 L419.9,94.19 L421.5,96.4 L423.5,98.4 L425.1,97.02 L426.7,92.7 L428.07,93.28 L429.43,90.04 L430.8,91.1 L432.2,90.87 L433.6,93.81 L435,93.2 L437.1,97.9 L439.2,92.7 L440.93,91.2 L442.67,91.44 L444.4,88.5 L446.2,92.62 L448,97.4 L449.3,91.58 L450.6,88.5 L452.07,87.88 L453.53,87.32 L455,85.4 L456.4,84.86 L457.8,84.48 L459.2,86 L460.77,87.77 L462.33,90.97 L463.9,92.2 L465.7,87.46 L467.5,81.8 L469.05,79.01 L470.6,77.6 L473.2,75.5 L474.5,71.69 L475.8,68.8 L477.4,70.3 L478.8,76.6 L480.5,70.9 L481.95,70.83 L483.4,71.41 L484.85,73.38 L486.3,73.5 L488.03,76.22 L489.77,80.21 L491.5,83.4 L493.05,80.41 L494.6,77.6 L496,77.04 L497.4,78.02 L498.8,77.6 L500.35,83.74 L501.9,91.2 L503.4,79.7 L504.97,78.93 L506.53,76.94 L508.1,76.6 L509.7,78.56 L511.3,80.8 L512.67,80.08 L514.03,79.99 L515.4,80.2 L516.95,82.65 L518.5,83.4 L519.8,86.8 L521.1,89.1 L522.7,81.8 L525.3,88 L526.6,85.35 L527.9,83.4 L529.3,83.39 L530.7,81.48 L532.1,81.3 L533.83,81.81 L535.57,83.34 L537.3,83.4 L538.7,82.96 L540.1,81.28 L541.5,81.3 L542.8,81.91 L544.1,80.23 L545.4,80.04 L546.7,80.2 L548.25,81.24 L549.8,81.3 L551.35,80.44 L552.9,80.2 L554.45,81.43 L556,83.4 L558.1,80.8 L559.5,81.13 L560.9,82.26 L562.3,84.1 L563.85,83.6 L565.4,82.8 L566.7,82.21 L568,82.73 L569.3,82.19 L570.6,82.3 L572.07,83.55 L573.53,85.79 L575,86.3 L576.55,83.37 L578.1,80.5 L579.95,82.23 L581.8,83.7 L583.6,83.16 L585.4,81.3 L586.98,80.65 L588.55,80.53 L590.12,81.81 L591.7,81 L593.07,82.37 L594.43,82.15 L595.8,83.4 L597.2,83.01 L598.6,84.16 L600,83.9 L601.57,86.26 L603.13,86.49 L604.7,88.6 L607.3,86.5 L608.6,89.11 L609.9,90.1 L611.26,89.55 L612.62,87.81 L613.98,86.24 L615.34,84.43 L616.7,83.9 L618.25,82.27 L619.8,82.3 L621.2,83.67 L622.6,82.9 L624,83.9 L625.3,84.14 L626.6,83.21 L627.9,84.11 L629.2,83.4 L631.3,96.4 L633.3,88 L635.4,92.2 L637.5,89.1 L639.08,88.35 L640.65,86.88 L642.22,85.74 L643.8,85.4 L645.35,89.75 L646.9,93.3 L649,85.4 L650.3,85.55 L651.6,86.76 L652.9,88.28 L654.2,89.1 L655.57,88.5 L656.93,86.84 L658.3,85.4 L660.4,97.4 L662.5,88.6 L664.05,88.95 L665.6,90.1 L667.45,96.05 L669.3,100.5 L670.6,93.72 L671.9,88 L673.45,89.48 L675,92.7 L676.3,90.73 L677.6,89.6 L679.2,100 L680.2,95.9 L681.6,98.04 L683,99.58 L684.4,102.6 L685.95,94.72 L687.5,88 L689,87.62 L690.5,87.85 L692,86.92 L693.5,87.19 L695,87.3 L697.1,86.3 L698.65,91.15 L700.2,94.6 L702.8,88.3 L704.1,89.71 L705.4,89.4 L706.95,88.13 L708.5,86.3 L710.1,87.64 L711.7,88.3 L713.25,87.45 L714.8,86.3 L716.1,85.1 L717.4,85.2 L718.97,84.73 L720.53,85.6 L722.1,86.3 L723.83,86.92 L725.57,87.11 L727.3,87.3 L728.72,88.15 L730.15,88.01 L731.58,88.97 L733,89.4 L734.85,88.34 L736.7,87.3 L738.25,87.96 L739.8,88.3 L741.1,87.4 L742.4,87.1 L743.7,85.68 L745,85.2 L746.38,85.23 L747.77,85.37 L749.15,85.48 L750.53,85.37 L751.92,85.34 L753.3,85.2 L754.7,85.57 L756.1,85.82 L757.5,85.7 L758.99,85.6 L760.47,85.83 L761.96,85.98 L763.44,85.96 L764.93,85.64 L766.41,85.9 L767.9,85.7 L769.3,85.79 L770.7,85.42 L772.1,85.29 L773.5,84.95 L774.9,84.92 L776.3,84.7 L778.3,87.3 L780.4,85.2 L781.8,85.28 L783.2,84.91 L784.6,85.3 L786,85.55 L787.4,85.47 L788.8,85.2 L790.1,85.48 L791.4,85.37 L792.7,85.74 L794,85.7 L795.33,85.61 L796.66,85.37 L797.99,85.51 L799.31,84.84 L800.64,85.16 L801.97,84.51 L803.3,84.7 L804.88,84.77 L806.45,84.69 L808.02,84.51 L809.6,84.7 L810.95,85.16 L812.3,85.35 L813.65,85.76 L815,86 L816.4,86.09 L817.8,85.43 L819.2,85.4 L820.93,85.42 L822.67,85.99 L824.4,86.5 L825.95,86.1 L827.5,85.24 L829.05,84.69 L830.6,84.4 L832.2,85.03 L833.8,85.1 L835.13,85.11 L836.46,84.86 L837.79,85.07 L839.11,84.58 L840.44,84.72 L841.77,84.29 L843.1,84.4 L844.4,86.45 L845.7,88.6 L848.3,86.5 L849.88,86.96 L851.45,87.29 L853.02,87.52 L854.6,87.5 L856.1,88.6 L857.46,87.26 L858.82,86.14 L860.18,84.38 L861.54,82.69 L862.9,82.3 L864.48,81.77 L866.05,82.06 L867.62,81.56 L869.2,80.2 L870.75,81.26 L872.3,81.3 L874.4,79.7 L876.5,86 L877.8,87.73 L879.1,86.76 L880.4,87.16 L881.7,88.6 L883.8,85.4 L885.3,92.2 L886.6,86.08 L887.9,80.2 L890,83.9 L891.3,89.06 L892.6,95.3 L894.17,91.68 L895.73,89.23 L897.3,86.5 L898.7,89.57 L900.1,92.02 L901.5,94.8 L902.8,91.76 L904.1,90.41 L905.4,88.16 L906.7,84.4 L908.25,86.89 L909.8,89.6 L911.6,91.73 L913.4,95.9 L914.7,90.58 L916,87.5 L917.3,91.79 L918.6,94.3 L920.2,89.3 L921.8,86.5 L923.1,87.78 L924.4,88.22 L925.7,88.37 L927,89.6 L928.8,87.95 L930.6,84.9 L932.07,83.18 L933.53,82.89 L935,83.2 L936.4,83.16 L937.8,82.19 L939.2,83.4 L940.75,84.44 L942.3,83.27 L943.85,83.29 L945.4,84.4 L946.98,84.09 L948.55,86.26 L950.12,86.6 L951.7,87.5 L953.07,87.48 L954.43,87.21 L955.8,86.5 L957.2,86.37 L958.6,85.87 L960,83.9 L961.57,85.21 L963.13,84.91 L964.7,86.5 L966.3,84.4 L967.67,85.21 L969.03,85.36 L970.4,87 L971.7,85.18 L973,85.63 L974.3,85.56 L975.6,84.4 L977.17,85.18 L978.75,86.95 L980.33,88.68 L981.9,90.6 L983.45,89.52 L985,87.5 L987.1,86 L988.4,88.65 L989.7,91.2 L992.3,84.4 L993.6,92.72 L994.9,100.5 L996.2,95.91 L997.5,90.1 L999.05,84.64 L1000.6,79.7 L1002.7,83.9 L1004.3,88 L1005.6,85.35 L1006.9,81.3 L1008.2,82.52 L1009.5,80.81 L1010.8,83.09 L1012.1,82.3 L1013.65,85.43 L1015.2,87.5 L1016.75,84.56 L1018.3,83.4 L1019.6,83.01 L1020.9,83.15 L1022.2,83.56 L1023.5,82.3 L1024.83,82.4 L1026.15,83.27 L1027.47,84.41 L1028.8,83.9 L1030.35,84.21 L1031.9,84.17 L1033.45,82.61 L1035,82.3 L1036.67,82.96 L1038.33,82.19 L1040,83.2 L1041.47,86.87 L1042.93,90.23 L1044.4,92.6 L1046.1,91.99 L1047.8,90.7 L1049.1,91.06 L1050.4,89.68 L1051.7,90.2 L1054.1,92.1 L1055.5,106.7 L1057,89.7 L1058.7,90.16 L1060.4,88.7 L1061.85,96.4 L1063.3,101.8 L1064.75,97.15 L1066.2,90.2 L1067.67,89.44 L1069.15,89.2 L1070.62,87.22 L1072.1,86.8 L1073.7,86.98 L1075.3,86.05 L1076.9,84.4 L1079.4,85.3 L1080.85,89.09 L1082.3,93.6 L1084.7,89.2 L1086.15,88.95 L1087.6,90.7 L1089.05,89.21 L1090.5,88.12 L1091.95,87.29 L1093.4,85.3 L1095.03,87.54 L1096.67,88.7 L1098.3,92.1 L1099.93,91.41 L1101.57,88.19 L1103.2,87.8 L1104.9,86.32 L1106.6,83.4 L1108.2,87.31 L1109.8,92.4 L1111.4,97.5 L1113.1,92.84 L1114.8,86.8 L1116.8,92.1 L1118.1,89.94 L1119.4,88.66 L1120.7,88.2 L1123.1,98.9 L1125.5,87.8 L1127.13,86.04 L1128.77,84.74 L1130.4,82.4 L1131.85,86.12 L1133.3,88.2 L1135.7,82.9 L1138.2,95 L1139.65,89.4 L1141.1,82.9 L1142.8,90.27 L1144.5,95.5 L1145.95,88.43 L1147.4,81.4 L1149.5,86.8" fill="none" stroke="#2a2a2a" stroke-width="0.9" stroke-linejoin="round"/><line x1="717.7" y1="67" x2="717.7" y2="114.5" stroke="#9CAC9C" stroke-width="1.5" stroke-dasharray="25,2,10,1.5,10"/><line x1="722.5" y1="51" x2="722.5" y2="67" stroke="#505060" stroke-width="1.2"/><line x1="722.5" y1="114" x2="722.5" y2="131" stroke="#505060" stroke-width="1.2"/><line x1="722.2" y1="67" x2="722.2" y2="114.5" stroke="#8C8CC4" stroke-width="1.5" stroke-dasharray="25,2,10,1.5,10"/><line x1="719" y1="71.5" x2="722" y2="82.5" stroke="#555" stroke-width="0.8"/><rect x="0" y="681" width="1152" height="1" fill="#D8D4C0"/><rect x="0" y="682" width="1152" height="1" fill="#FFFFFF"/><line x1="0.5" y1="685" x2="0.5" y2="696" stroke="#B8B4A2" stroke-width="1"/><line x1="0" y1="685.5" x2="47" y2="685.5" stroke="#B8B4A2" stroke-width="1"/><line x1="46.5" y1="685" x2="46.5" y2="696" stroke="#FFFFFF" stroke-width="1"/><text x="1.5" y="694" font-family="Liberation Sans, sans-serif" font-size="10.2" fill="#000">19,21 ms</text><line x1="49.5" y1="685" x2="49.5" y2="696" stroke="#B8B4A2" stroke-width="1"/><line x1="49" y1="685.5" x2="96" y2="685.5" stroke="#B8B4A2" stroke-width="1"/><line x1="95.5" y1="685" x2="95.5" y2="696" stroke="#FFFFFF" stroke-width="1"/><text x="50.5" y="694" font-family="Liberation Sans, sans-serif" font-size="10.2" fill="#000">6,597 m</text><line x1="97.5" y1="685" x2="97.5" y2="696" stroke="#B8B4A2" stroke-width="1"/><line x1="97" y1="685.5" x2="143" y2="685.5" stroke="#B8B4A2" stroke-width="1"/><line x1="142.5" y1="685" x2="142.5" y2="696" stroke="#FFFFFF" stroke-width="1"/><line x1="145.5" y1="685" x2="145.5" y2="696" stroke="#B8B4A2" stroke-width="1"/><line x1="145" y1="685.5" x2="191" y2="685.5" stroke="#B8B4A2" stroke-width="1"/><line x1="190.5" y1="685" x2="190.5" y2="696" stroke="#FFFFFF" stroke-width="1"/><text x="146.5" y="694" font-family="Liberation Sans, sans-serif" font-size="10.2" fill="#000">311,9 Hz</text><line x1="192.5" y1="685" x2="192.5" y2="696" stroke="#B8B4A2" stroke-width="1"/><line x1="192" y1="685.5" x2="238" y2="685.5" stroke="#B8B4A2" stroke-width="1"/><line x1="237.5" y1="685" x2="237.5" y2="696" stroke="#FFFFFF" stroke-width="1"/><text x="193.5" y="694" font-family="Liberation Sans, sans-serif" font-size="10.2" fill="#000">1,101 m</text><line x1="240.5" y1="685" x2="240.5" y2="696" stroke="#B8B4A2" stroke-width="1"/><line x1="240" y1="685.5" x2="288" y2="685.5" stroke="#B8B4A2" stroke-width="1"/><line x1="287.5" y1="685" x2="287.5" y2="696" stroke="#FFFFFF" stroke-width="1"/><text x="241.5" y="694" font-family="Liberation Sans, sans-serif" font-size="10.2" fill="#000">109,2 dB</text><line x1="289.5" y1="685" x2="289.5" y2="696" stroke="#B8B4A2" stroke-width="1"/><line x1="289" y1="685.5" x2="335" y2="685.5" stroke="#B8B4A2" stroke-width="1"/><line x1="334.5" y1="685" x2="334.5" y2="696" stroke="#FFFFFF" stroke-width="1"/><line x1="336.5" y1="685" x2="336.5" y2="696" stroke="#B8B4A2" stroke-width="1"/><line x1="336" y1="685.5" x2="383" y2="685.5" stroke="#B8B4A2" stroke-width="1"/><line x1="382.5" y1="685" x2="382.5" y2="696" stroke="#FFFFFF" stroke-width="1"/><line x1="384.5" y1="685" x2="384.5" y2="696" stroke="#B8B4A2" stroke-width="1"/><line x1="384" y1="685.5" x2="1152" y2="685.5" stroke="#B8B4A2" stroke-width="1"/><line x1="1151.5" y1="685" x2="1151.5" y2="696" stroke="#FFFFFF" stroke-width="1"/><text x="385.5" y="694" font-family="Liberation Sans, sans-serif" font-size="10.2" fill="#000">Cal:2011-01-14 11:17:09 Rec:2011-01-14 12:30:04</text><line x1="1140" y1="695" x2="1150" y2="685" stroke="#B8B4A2" stroke-width="1"/><line x1="1143.5" y1="695" x2="1150" y2="688.5" stroke="#B8B4A2" stroke-width="1"/><line x1="1147" y1="695" x2="1150" y2="692" stroke="#B8B4A2" stroke-width="1"/><rect x="0" y="695.5" width="1152" height="2.5" fill="#2F6FE5"/><rect x="0" y="695.5" width="57" height="2.5" fill="#3A9A3A"/><g font-family="Liberation Sans, sans-serif" font-size="7.5" fill="#111" stroke="#111" stroke-width="0.2"><text x="101.76" y="675.1" text-anchor="middle" transform="scale(0.8500 1)">30</text><text x="150" y="675.1" text-anchor="middle" transform="scale(0.8500 1)">40</text><text x="187.65" y="675.1" text-anchor="middle" transform="scale(0.8500 1)">50</text><text x="219.41" y="675.1" text-anchor="middle" transform="scale(0.8500 1)">60</text><text x="245.29" y="675.1" text-anchor="middle" transform="scale(0.8500 1)">70</text><text x="268.82" y="675.1" text-anchor="middle" transform="scale(0.8500 1)">80</text><text x="288.82" y="675.1" text-anchor="middle" transform="scale(0.8500 1)">90</text><text x="306.47" y="675.1" text-anchor="middle" transform="scale(0.8500 1)">100</text><text x="424.12" y="675.1" text-anchor="middle" transform="scale(0.8500 1)">200</text><text x="493.53" y="675.1" text-anchor="middle" transform="scale(0.8500 1)">300</text><text x="542.94" y="675.1" text-anchor="middle" transform="scale(0.8500 1)">400</text><text x="580.59" y="675.1" text-anchor="middle" transform="scale(0.8500 1)">500</text><text x="611.18" y="675.1" text-anchor="middle" transform="scale(0.8500 1)">600</text><text x="637.06" y="675.1" text-anchor="middle" transform="scale(0.8500 1)">700</text><text x="660.59" y="675.1" text-anchor="middle" transform="scale(0.8500 1)">800</text><text x="680.59" y="675.1" text-anchor="middle" transform="scale(0.8500 1)">900</text><text x="698.24" y="675.1" text-anchor="middle" transform="scale(0.8500 1)">1000</text><text x="815.88" y="675.1" text-anchor="middle" transform="scale(0.8500 1)">2000</text><text x="885.29" y="675.1" text-anchor="middle" transform="scale(0.8500 1)">3000</text><text x="934.71" y="675.1" text-anchor="middle" transform="scale(0.8500 1)">4000</text><text x="972.35" y="675.1" text-anchor="middle" transform="scale(0.8500 1)">5000</text><text x="1002.94" y="675.1" text-anchor="middle" transform="scale(0.8500 1)">6000</text><text x="1030" y="675.1" text-anchor="middle" transform="scale(0.8500 1)">7000</text><text x="1052.35" y="675.1" text-anchor="middle" transform="scale(0.8500 1)">8000</text><text x="1091.18" y="675.1" text-anchor="middle" transform="scale(0.8500 1)">10000</text><text x="24.94" y="662.4" text-anchor="end" transform="scale(0.8500 1)">80</text><text x="24.94" y="641.4" text-anchor="end" transform="scale(0.8500 1)">82</text><text x="24.94" y="622.4" text-anchor="end" transform="scale(0.8500 1)">84</text><text x="24.94" y="601.4" text-anchor="end" transform="scale(0.8500 1)">86</text><text x="24.94" y="581.4" text-anchor="end" transform="scale(0.8500 1)">88</text><text x="24.94" y="561.4" text-anchor="end" transform="scale(0.8500 1)">90</text><text x="24.94" y="541.4" text-anchor="end" transform="scale(0.8500 1)">92</text><text x="24.94" y="521.4" text-anchor="end" transform="scale(0.8500 1)">94</text><text x="24.94" y="500.4" text-anchor="end" transform="scale(0.8500 1)">96</text><text x="24.94" y="480.4" text-anchor="end" transform="scale(0.8500 1)">98</text><text x="24.94" y="460.4" text-anchor="end" transform="scale(0.8500 1)">100</text><text x="24.94" y="440.4" text-anchor="end" transform="scale(0.8500 1)">102</text><text x="24.94" y="420.4" text-anchor="end" transform="scale(0.8500 1)">104</text><text x="24.94" y="399.4" text-anchor="end" transform="scale(0.8500 1)">106</text><text x="24.94" y="379.4" text-anchor="end" transform="scale(0.8500 1)">108</text><text x="24.94" y="359.4" text-anchor="end" transform="scale(0.8500 1)">110</text><text x="24.94" y="338.4" text-anchor="end" transform="scale(0.8500 1)">112</text><text x="24.94" y="319.4" text-anchor="end" transform="scale(0.8500 1)">114</text><text x="24.94" y="298.4" text-anchor="end" transform="scale(0.8500 1)">116</text><text x="24.94" y="278.4" text-anchor="end" transform="scale(0.8500 1)">118</text><text x="24.94" y="258.4" text-anchor="end" transform="scale(0.8500 1)">120</text><text x="24.94" y="238.4" text-anchor="end" transform="scale(0.8500 1)">122</text><text x="24.94" y="218.4" text-anchor="end" transform="scale(0.8500 1)">124</text><text x="24.94" y="198.4" text-anchor="end" transform="scale(0.8500 1)">126</text><text x="24.94" y="177.4" text-anchor="end" transform="scale(0.8500 1)">128</text><text x="1147.49" y="675.2" text-anchor="end" transform="scale(0.8950 1)">[Hz]</text><text x="124.12" y="149.2" text-anchor="middle" transform="scale(0.8500 1)">10</text><text x="141.76" y="149.2" text-anchor="middle" transform="scale(0.8500 1)">9</text><text x="161.76" y="149.2" text-anchor="middle" transform="scale(0.8500 1)">8</text><text x="185.29" y="149.2" text-anchor="middle" transform="scale(0.8500 1)">7</text><text x="211.18" y="149.2" text-anchor="middle" transform="scale(0.8500 1)">6</text><text x="241.76" y="149.2" text-anchor="middle" transform="scale(0.8500 1)">5</text><text x="280.59" y="149.2" text-anchor="middle" transform="scale(0.8500 1)">4</text><text x="328.82" y="149.2" text-anchor="middle" transform="scale(0.8500 1)">3</text><text x="398.24" y="149.2" text-anchor="middle" transform="scale(0.8500 1)">2</text><text x="515.88" y="149.2" text-anchor="middle" transform="scale(0.8500 1)">1</text><text x="534.71" y="149.2" text-anchor="middle" transform="scale(0.8500 1)">0,9</text><text x="554.71" y="149.2" text-anchor="middle" transform="scale(0.8500 1)">0,8</text><text x="577.06" y="149.2" text-anchor="middle" transform="scale(0.8500 1)">0,7</text><text x="602.94" y="149.2" text-anchor="middle" transform="scale(0.8500 1)">0,6</text><text x="634.71" y="149.2" text-anchor="middle" transform="scale(0.8500 1)">0,5</text><text x="672.35" y="149.2" text-anchor="middle" transform="scale(0.8500 1)">0,4</text><text x="720.59" y="149.2" text-anchor="middle" transform="scale(0.8500 1)">0,3</text><text x="790" y="149.2" text-anchor="middle" transform="scale(0.8500 1)">0,2</text><text x="907.65" y="149.2" text-anchor="middle" transform="scale(0.8500 1)">0,1</text><text x="926.47" y="149.2" text-anchor="middle" transform="scale(0.8500 1)">0,09</text><text x="946.47" y="149.2" text-anchor="middle" transform="scale(0.8500 1)">0,08</text><text x="968.82" y="149.2" text-anchor="middle" transform="scale(0.8500 1)">0,07</text><text x="994.71" y="149.2" text-anchor="middle" transform="scale(0.8500 1)">0,06</text><text x="1026.47" y="149.2" text-anchor="middle" transform="scale(0.8500 1)">0,05</text><text x="1064.12" y="149.2" text-anchor="middle" transform="scale(0.8500 1)">0,04</text><text x="1113.53" y="149.2" text-anchor="middle" transform="scale(0.8500 1)">0,03</text><text x="1181.76" y="149.2" text-anchor="middle" transform="scale(0.8500 1)">0,02</text><text x="1148.04" y="149.4" text-anchor="end" transform="scale(0.8950 1)">[m]</text><text x="1146.37" y="162.7" text-anchor="end" transform="scale(0.8950 1)">Harmonic #1</text><text x="2.79" y="160.2" text-anchor="start" transform="scale(0.8950 1)">[dB]</text><text x="1252.12" y="665.5" text-anchor="end" transform="scale(0.8500 1)">-0,05</text><text x="1252.12" y="654.86" text-anchor="end" transform="scale(0.8500 1)">-0,048</text><text x="1252.12" y="644.22" text-anchor="end" transform="scale(0.8500 1)">-0,046</text><text x="1252.12" y="633.58" text-anchor="end" transform="scale(0.8500 1)">-0,044</text><text x="1252.12" y="622.94" text-anchor="end" transform="scale(0.8500 1)">-0,042</text><text x="1252.12" y="612.3" text-anchor="end" transform="scale(0.8500 1)">-0,04</text><text x="1252.12" y="601.66" text-anchor="end" transform="scale(0.8500 1)">-0,038</text><text x="1252.12" y="591.02" text-anchor="end" transform="scale(0.8500 1)">-0,036</text><text x="1252.12" y="580.38" text-anchor="end" transform="scale(0.8500 1)">-0,034</text><text x="1252.12" y="569.74" text-anchor="end" transform="scale(0.8500 1)">-0,032</text><text x="1252.12" y="559.1" text-anchor="end" transform="scale(0.8500 1)">-0,03</text><text x="1252.12" y="548.46" text-anchor="end" transform="scale(0.8500 1)">-0,028</text><text x="1252.12" y="537.82" text-anchor="end" transform="scale(0.8500 1)">-0,026</text><text x="1252.12" y="527.18" text-anchor="end" transform="scale(0.8500 1)">-0,024</text><text x="1252.12" y="516.54" text-anchor="end" transform="scale(0.8500 1)">-0,022</text><text x="1252.12" y="505.9" text-anchor="end" transform="scale(0.8500 1)">-0,02</text><text x="1252.12" y="495.26" text-anchor="end" transform="scale(0.8500 1)">-0,018</text><text x="1252.12" y="484.62" text-anchor="end" transform="scale(0.8500 1)">-0,016</text><text x="1252.12" y="473.98" text-anchor="end" transform="scale(0.8500 1)">-0,014</text><text x="1252.12" y="463.34" text-anchor="end" transform="scale(0.8500 1)">-0,012</text><text x="1252.12" y="452.7" text-anchor="end" transform="scale(0.8500 1)">-0,01</text><text x="1252.12" y="442.06" text-anchor="end" transform="scale(0.8500 1)">-0,008</text><text x="1252.12" y="431.42" text-anchor="end" transform="scale(0.8500 1)">-0,006</text><text x="1252.12" y="420.78" text-anchor="end" transform="scale(0.8500 1)">-0,004</text><text x="1252.12" y="410.14" text-anchor="end" transform="scale(0.8500 1)">-0,002</text><text x="1252.12" y="399.5" text-anchor="end" transform="scale(0.8500 1)">0</text><text x="1252.12" y="388.86" text-anchor="end" transform="scale(0.8500 1)">0,002</text><text x="1252.12" y="378.22" text-anchor="end" transform="scale(0.8500 1)">0,004</text><text x="1252.12" y="367.58" text-anchor="end" transform="scale(0.8500 1)">0,006</text><text x="1252.12" y="356.94" text-anchor="end" transform="scale(0.8500 1)">0,008</text><text x="1252.12" y="346.3" text-anchor="end" transform="scale(0.8500 1)">0,01</text><text x="1252.12" y="335.66" text-anchor="end" transform="scale(0.8500 1)">0,012</text><text x="1252.12" y="325.02" text-anchor="end" transform="scale(0.8500 1)">0,014</text><text x="1252.12" y="314.38" text-anchor="end" transform="scale(0.8500 1)">0,016</text><text x="1252.12" y="303.74" text-anchor="end" transform="scale(0.8500 1)">0,018</text><text x="1252.12" y="293.1" text-anchor="end" transform="scale(0.8500 1)">0,02</text><text x="1252.12" y="282.46" text-anchor="end" transform="scale(0.8500 1)">0,022</text><text x="1252.12" y="271.82" text-anchor="end" transform="scale(0.8500 1)">0,024</text><text x="1252.12" y="261.18" text-anchor="end" transform="scale(0.8500 1)">0,026</text><text x="1252.12" y="250.54" text-anchor="end" transform="scale(0.8500 1)">0,028</text><text x="1252.12" y="239.9" text-anchor="end" transform="scale(0.8500 1)">0,03</text><text x="1252.12" y="229.26" text-anchor="end" transform="scale(0.8500 1)">0,032</text><text x="1252.12" y="218.62" text-anchor="end" transform="scale(0.8500 1)">0,034</text><text x="1252.12" y="207.98" text-anchor="end" transform="scale(0.8500 1)">0,036</text><text x="1252.12" y="197.34" text-anchor="end" transform="scale(0.8500 1)">0,038</text><text x="1252.12" y="186.7" text-anchor="end" transform="scale(0.8500 1)">0,04</text><text x="1252.12" y="176.06" text-anchor="end" transform="scale(0.8500 1)">0,042</text><text x="1252.12" y="165.42" text-anchor="end" transform="scale(0.8500 1)">0,044</text><text x="1252.12" y="154.78" text-anchor="end" transform="scale(0.8500 1)">0,046</text><text x="1252.12" y="144.14" text-anchor="end" transform="scale(0.8500 1)">0,048</text><text x="1307.76" y="682.2" text-anchor="middle" transform="scale(0.8500 1)">10</text><text x="1284.92" y="682.2" text-anchor="end" transform="scale(0.8950 1)">[ms]</text><text x="1350.82" y="144.7" text-anchor="end" transform="scale(0.8500 1)">Gated impulse response</text><text x="25.06" y="82.1" text-anchor="end" transform="scale(0.8500 1)">0,5</text><text x="25.06" y="93.7" text-anchor="end" transform="scale(0.8500 1)">0</text><text x="25.06" y="106.1" text-anchor="end" transform="scale(0.8500 1)">-0,5</text><text x="39.41" y="63.3" text-anchor="middle" transform="scale(0.8500 1)">0</text><text x="76.32" y="63.3" text-anchor="middle" transform="scale(0.8500 1)">200</text><text x="113.22" y="63.3" text-anchor="middle" transform="scale(0.8500 1)">400</text><text x="150.13" y="63.3" text-anchor="middle" transform="scale(0.8500 1)">600</text><text x="187.04" y="63.3" text-anchor="middle" transform="scale(0.8500 1)">800</text><text x="210.06" y="63.3" text-anchor="end" transform="scale(0.8950 1)">[m]</text><text x="39.41" y="125.3" text-anchor="middle" transform="scale(0.8500 1)">0</text><text x="102.71" y="125.3" text-anchor="middle" transform="scale(0.8500 1)">1</text><text x="166" y="125.3" text-anchor="middle" transform="scale(0.8500 1)">2</text><text x="210.61" y="125.3" text-anchor="end" transform="scale(0.8950 1)">[s]</text><text x="209.16" y="76" text-anchor="end" transform="scale(0.8950 1)">Input signal</text><text x="216.76" y="73.5" text-anchor="start" transform="scale(0.8950 1)">[dB]</text><text x="250" y="85.8" text-anchor="end" transform="scale(0.8500 1)">-60</text><text x="250" y="94.3" text-anchor="end" transform="scale(0.8500 1)">-80</text><text x="250" y="102.9" text-anchor="end" transform="scale(0.8500 1)">-100</text><text x="250" y="111.5" text-anchor="end" transform="scale(0.8500 1)">-120</text><text x="259.65" y="63.3" text-anchor="middle" transform="scale(0.8500 1)">3</text><text x="276.04" y="63.3" text-anchor="middle" transform="scale(0.8500 1)">3,1</text><text x="292.44" y="63.3" text-anchor="middle" transform="scale(0.8500 1)">3,2</text><text x="308.83" y="63.3" text-anchor="middle" transform="scale(0.8500 1)">3,3</text><text x="325.22" y="63.3" text-anchor="middle" transform="scale(0.8500 1)">3,4</text><text x="341.62" y="63.3" text-anchor="middle" transform="scale(0.8500 1)">3,5</text><text x="358.01" y="63.3" text-anchor="middle" transform="scale(0.8500 1)">3,6</text><text x="374.41" y="63.3" text-anchor="middle" transform="scale(0.8500 1)">3,7</text><text x="390.8" y="63.3" text-anchor="middle" transform="scale(0.8500 1)">3,8</text><text x="407.19" y="63.3" text-anchor="middle" transform="scale(0.8500 1)">3,9</text><text x="423.59" y="63.3" text-anchor="middle" transform="scale(0.8500 1)">4</text><text x="439.98" y="63.3" text-anchor="middle" transform="scale(0.8500 1)">4,1</text><text x="456.38" y="63.3" text-anchor="middle" transform="scale(0.8500 1)">4,2</text><text x="472.77" y="63.3" text-anchor="middle" transform="scale(0.8500 1)">4,3</text><text x="489.16" y="63.3" text-anchor="middle" transform="scale(0.8500 1)">4,4</text><text x="505.56" y="63.3" text-anchor="middle" transform="scale(0.8500 1)">4,5</text><text x="521.95" y="63.3" text-anchor="middle" transform="scale(0.8500 1)">4,6</text><text x="538.35" y="63.3" text-anchor="middle" transform="scale(0.8500 1)">4,7</text><text x="554.74" y="63.3" text-anchor="middle" transform="scale(0.8500 1)">4,8</text><text x="571.14" y="63.3" text-anchor="middle" transform="scale(0.8500 1)">4,9</text><text x="587.53" y="63.3" text-anchor="middle" transform="scale(0.8500 1)">5</text><text x="603.92" y="63.3" text-anchor="middle" transform="scale(0.8500 1)">5,1</text><text x="620.32" y="63.3" text-anchor="middle" transform="scale(0.8500 1)">5,2</text><text x="636.71" y="63.3" text-anchor="middle" transform="scale(0.8500 1)">5,3</text><text x="653.11" y="63.3" text-anchor="middle" transform="scale(0.8500 1)">5,4</text><text x="669.5" y="63.3" text-anchor="middle" transform="scale(0.8500 1)">5,5</text><text x="685.89" y="63.3" text-anchor="middle" transform="scale(0.8500 1)">5,6</text><text x="702.29" y="63.3" text-anchor="middle" transform="scale(0.8500 1)">5,7</text><text x="718.68" y="63.3" text-anchor="middle" transform="scale(0.8500 1)">5,8</text><text x="735.08" y="63.3" text-anchor="middle" transform="scale(0.8500 1)">5,9</text><text x="751.47" y="63.3" text-anchor="middle" transform="scale(0.8500 1)">6</text><text x="767.86" y="63.3" text-anchor="middle" transform="scale(0.8500 1)">6,1</text><text x="784.26" y="63.3" text-anchor="middle" transform="scale(0.8500 1)">6,2</text><text x="800.65" y="63.3" text-anchor="middle" transform="scale(0.8500 1)">6,3</text><text x="817.05" y="63.3" text-anchor="middle" transform="scale(0.8500 1)">6,4</text><text x="833.44" y="63.3" text-anchor="middle" transform="scale(0.8500 1)">6,5</text><text x="849.84" y="63.3" text-anchor="middle" transform="scale(0.8500 1)">6,6</text><text x="866.23" y="63.3" text-anchor="middle" transform="scale(0.8500 1)">6,7</text><text x="882.62" y="63.3" text-anchor="middle" transform="scale(0.8500 1)">6,8</text><text x="899.02" y="63.3" text-anchor="middle" transform="scale(0.8500 1)">6,9</text><text x="915.41" y="63.3" text-anchor="middle" transform="scale(0.8500 1)">7</text><text x="931.81" y="63.3" text-anchor="middle" transform="scale(0.8500 1)">7,1</text><text x="948.2" y="63.3" text-anchor="middle" transform="scale(0.8500 1)">7,2</text><text x="964.59" y="63.3" text-anchor="middle" transform="scale(0.8500 1)">7,3</text><text x="980.99" y="63.3" text-anchor="middle" transform="scale(0.8500 1)">7,4</text><text x="997.38" y="63.3" text-anchor="middle" transform="scale(0.8500 1)">7,5</text><text x="1013.78" y="63.3" text-anchor="middle" transform="scale(0.8500 1)">7,6</text><text x="1030.17" y="63.3" text-anchor="middle" transform="scale(0.8500 1)">7,7</text><text x="1046.56" y="63.3" text-anchor="middle" transform="scale(0.8500 1)">7,8</text><text x="1062.96" y="63.3" text-anchor="middle" transform="scale(0.8500 1)">7,9</text><text x="1079.35" y="63.3" text-anchor="middle" transform="scale(0.8500 1)">8</text><text x="1095.75" y="63.3" text-anchor="middle" transform="scale(0.8500 1)">8,1</text><text x="1112.14" y="63.3" text-anchor="middle" transform="scale(0.8500 1)">8,2</text><text x="1128.54" y="63.3" text-anchor="middle" transform="scale(0.8500 1)">8,3</text><text x="1144.93" y="63.3" text-anchor="middle" transform="scale(0.8500 1)">8,4</text><text x="1161.32" y="63.3" text-anchor="middle" transform="scale(0.8500 1)">8,5</text><text x="1177.72" y="63.3" text-anchor="middle" transform="scale(0.8500 1)">8,6</text><text x="1194.11" y="63.3" text-anchor="middle" transform="scale(0.8500 1)">8,7</text><text x="1210.51" y="63.3" text-anchor="middle" transform="scale(0.8500 1)">8,8</text><text x="1226.9" y="63.3" text-anchor="middle" transform="scale(0.8500 1)">8,9</text><text x="1243.29" y="63.3" text-anchor="middle" transform="scale(0.8500 1)">9</text><text x="1259.69" y="63.3" text-anchor="middle" transform="scale(0.8500 1)">9,1</text><text x="1276.08" y="63.3" text-anchor="middle" transform="scale(0.8500 1)">9,2</text><text x="1292.48" y="63.3" text-anchor="middle" transform="scale(0.8500 1)">9,3</text><text x="1308.87" y="63.3" text-anchor="middle" transform="scale(0.8500 1)">9,4</text><text x="1325.26" y="63.3" text-anchor="middle" transform="scale(0.8500 1)">9,5</text><text x="1284.36" y="63.3" text-anchor="end" transform="scale(0.8950 1)">[m]</text><text x="274.12" y="125.1" text-anchor="middle" transform="scale(0.8500 1)">9</text><text x="302.26" y="125.1" text-anchor="middle" transform="scale(0.8500 1)">9,5</text><text x="330.41" y="125.1" text-anchor="middle" transform="scale(0.8500 1)">10</text><text x="358.56" y="125.1" text-anchor="middle" transform="scale(0.8500 1)">10,5</text><text x="386.71" y="125.1" text-anchor="middle" transform="scale(0.8500 1)">11</text><text x="414.85" y="125.1" text-anchor="middle" transform="scale(0.8500 1)">11,5</text><text x="443" y="125.1" text-anchor="middle" transform="scale(0.8500 1)">12</text><text x="471.15" y="125.1" text-anchor="middle" transform="scale(0.8500 1)">12,5</text><text x="499.29" y="125.1" text-anchor="middle" transform="scale(0.8500 1)">13</text><text x="527.44" y="125.1" text-anchor="middle" transform="scale(0.8500 1)">13,5</text><text x="555.59" y="125.1" text-anchor="middle" transform="scale(0.8500 1)">14</text><text x="583.74" y="125.1" text-anchor="middle" transform="scale(0.8500 1)">14,5</text><text x="611.88" y="125.1" text-anchor="middle" transform="scale(0.8500 1)">15</text><text x="640.03" y="125.1" text-anchor="middle" transform="scale(0.8500 1)">15,5</text><text x="668.18" y="125.1" text-anchor="middle" transform="scale(0.8500 1)">16</text><text x="696.32" y="125.1" text-anchor="middle" transform="scale(0.8500 1)">16,5</text><text x="724.47" y="125.1" text-anchor="middle" transform="scale(0.8500 1)">17</text><text x="752.62" y="125.1" text-anchor="middle" transform="scale(0.8500 1)">17,5</text><text x="780.76" y="125.1" text-anchor="middle" transform="scale(0.8500 1)">18</text><text x="808.91" y="125.1" text-anchor="middle" transform="scale(0.8500 1)">18,5</text><text x="837.06" y="125.1" text-anchor="middle" transform="scale(0.8500 1)">19</text><text x="865.21" y="125.1" text-anchor="middle" transform="scale(0.8500 1)">19,5</text><text x="893.35" y="125.1" text-anchor="middle" transform="scale(0.8500 1)">20</text><text x="921.5" y="125.1" text-anchor="middle" transform="scale(0.8500 1)">20,5</text><text x="949.65" y="125.1" text-anchor="middle" transform="scale(0.8500 1)">21</text><text x="977.79" y="125.1" text-anchor="middle" transform="scale(0.8500 1)">21,5</text><text x="1005.94" y="125.1" text-anchor="middle" transform="scale(0.8500 1)">22</text><text x="1034.09" y="125.1" text-anchor="middle" transform="scale(0.8500 1)">22,5</text><text x="1062.24" y="125.1" text-anchor="middle" transform="scale(0.8500 1)">23</text><text x="1090.38" y="125.1" text-anchor="middle" transform="scale(0.8500 1)">23,5</text><text x="1118.53" y="125.1" text-anchor="middle" transform="scale(0.8500 1)">24</text><text x="1146.68" y="125.1" text-anchor="middle" transform="scale(0.8500 1)">24,5</text><text x="1174.82" y="125.1" text-anchor="middle" transform="scale(0.8500 1)">25</text><text x="1202.97" y="125.1" text-anchor="middle" transform="scale(0.8500 1)">25,5</text><text x="1231.12" y="125.1" text-anchor="middle" transform="scale(0.8500 1)">26</text><text x="1259.26" y="125.1" text-anchor="middle" transform="scale(0.8500 1)">26,5</text><text x="1287.41" y="125.1" text-anchor="middle" transform="scale(0.8500 1)">27</text><text x="1315.56" y="125.1" text-anchor="middle" transform="scale(0.8500 1)">27,5</text><text x="1284.92" y="125.1" text-anchor="end" transform="scale(0.8950 1)">[ms]</text><text x="1319.54" y="76.6" text-anchor="end" transform="scale(0.8700 1)">[Impulse response]</text></g></svg></body></html>
